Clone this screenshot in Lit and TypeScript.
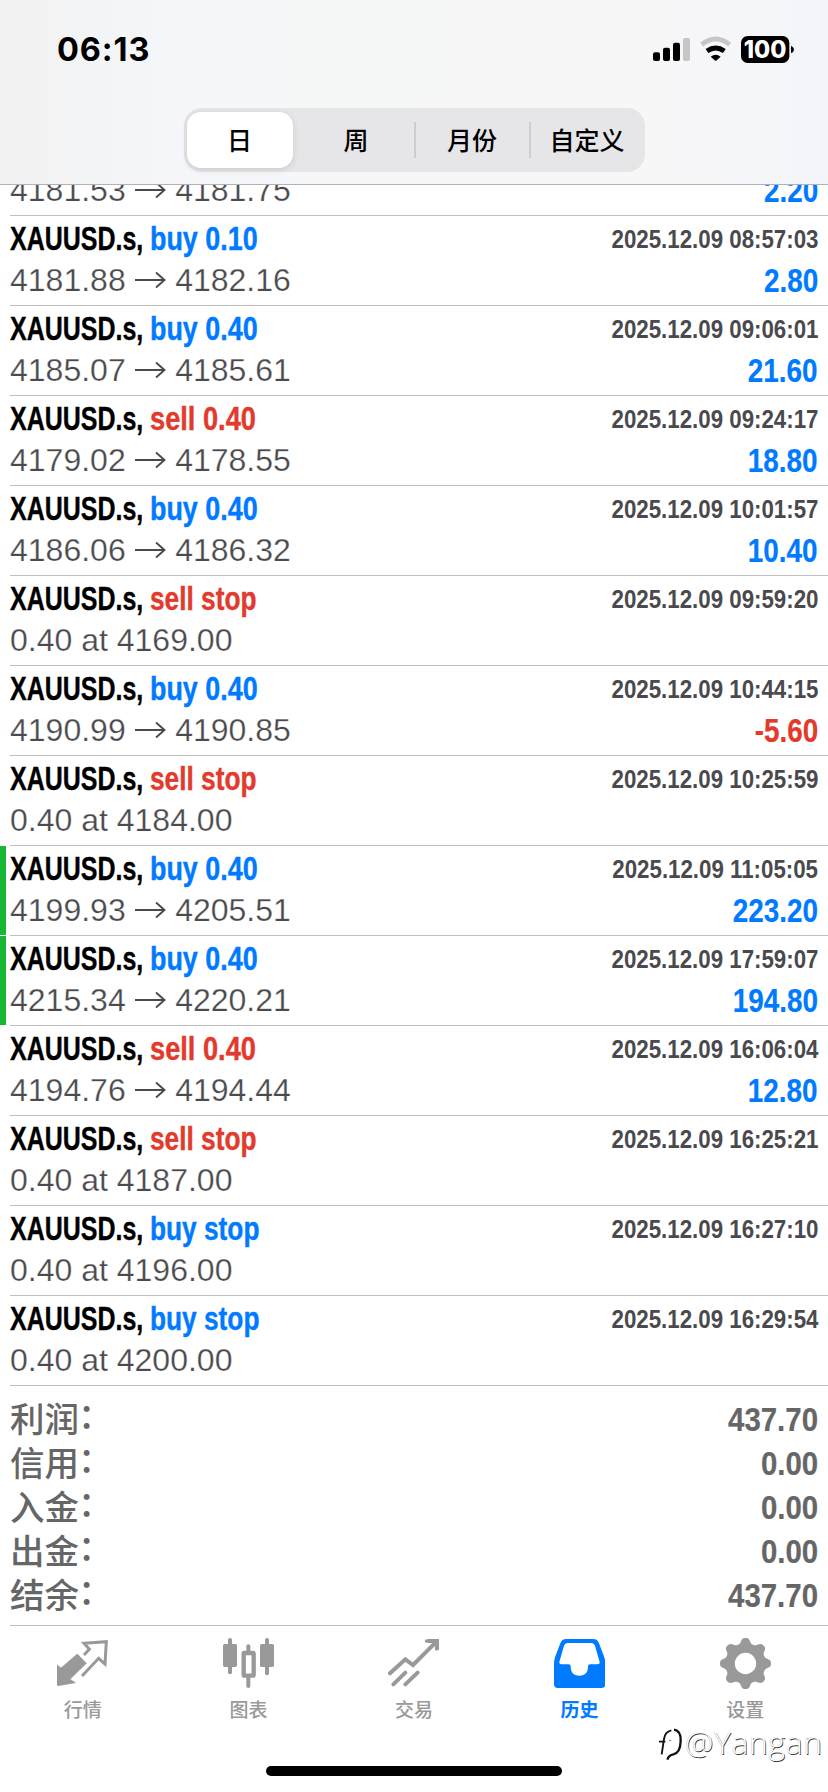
import { LitElement, html, css, svg, nothing } from "lit";
import { customElement, property } from "lit/decorators.js";

interface Deal {
  side: "buy" | "sell";
  size: string;
  detail: string;
  to?: string;
  time: string;
  profit?: string;
  marked?: boolean;
  partial?: boolean;
}

const deal = (side: "buy" | "sell", size: string, detail: string, to: string, time: string, profit: string, marked = false): Deal =>
  ({ side, size, detail, to, time: `2025.12.09 ${time}`, profit, marked });
const order = (side: "buy" | "sell", detail: string, time: string): Deal =>
  ({ side, size: "stop", detail, time: `2025.12.09 ${time}` });

const DEALS: Deal[] = [
  { side: "buy", size: "", detail: "4181.53", to: "4181.75", time: "", profit: "2.20", partial: true },
  deal("buy", "0.10", "4181.88", "4182.16", "08:57:03", "2.80"),
  deal("buy", "0.40", "4185.07", "4185.61", "09:06:01", "21.60"),
  deal("sell", "0.40", "4179.02", "4178.55", "09:24:17", "18.80"),
  deal("buy", "0.40", "4186.06", "4186.32", "10:01:57", "10.40"),
  order("sell", "0.40 at 4169.00", "09:59:20"),
  deal("buy", "0.40", "4190.99", "4190.85", "10:44:15", "-5.60"),
  order("sell", "0.40 at 4184.00", "10:25:59"),
  deal("buy", "0.40", "4199.93", "4205.51", "11:05:05", "223.20", true),
  deal("buy", "0.40", "4215.34", "4220.21", "17:59:07", "194.80", true),
  deal("sell", "0.40", "4194.76", "4194.44", "16:06:04", "12.80"),
  order("sell", "0.40 at 4187.00", "16:25:21"),
  order("buy", "0.40 at 4196.00", "16:27:10"),
  order("buy", "0.40 at 4200.00", "16:29:54"),
];

const TOTALS = [
  ["利润", "437.70"],
  ["信用", "0.00"],
  ["入金", "0.00"],
  ["出金", "0.00"],
  ["结余", "437.70"],
];

@customElement("deal-row")
class DealRow extends LitElement {
  @property({ attribute: false }) deal!: Deal;

  static styles = css`
    :host { display: block; flex: none; font-family: "Liberation Sans", Arial, sans-serif; }
    .row { display: flex; height: 90px; }
    .bar { width: 6px; height: 89px; margin-right: 4px; flex: none; }
    .marked { background: #18b733; }
    .body { flex: 1; box-sizing: border-box; border-bottom: 1px solid #bfbfc1; padding: 2px 10px 0 0; }
    .partial { height: 31px; overflow: hidden; }
    .partial .body { padding-top: 0; }
    .partial .line { margin-top: -16px; }
    .line { display: flex; justify-content: space-between; height: 41px; white-space: nowrap; }
    .title { display: flex; font-weight: 700; font-size: 33px; line-height: 41px; -webkit-text-stroke: 0.4px currentColor; }
    .symbol { width: 140px; color: #000; }
    .fit { display: inline-block; transform-origin: 0 50%; }
    .symbol .fit { transform: scaleX(0.757); }
    .buy { color: #007aff; }
    .sell { color: #e23a2c; }
    .action .fit { transform: scaleX(0.815); }
    .action.sell .fit { transform: scaleX(0.825); }
    .action.stop .fit { transform: scaleX(0.796); }
    .time, .profit { font-weight: 700; transform-origin: 100% 50%; }
    .time { font-size: 26px; line-height: 42px; color: #4a4a4e; transform: scaleX(0.857); }
    .profit { font-size: 33px; line-height: 43px; transform: scaleX(0.845); -webkit-text-stroke: 0.2px currentColor; }
    .price { display: flex; align-items: center; font-size: 32px; line-height: 42px; color: #4a4a4e; -webkit-text-stroke: 0.25px #fff; }
    .arrow { width: 32px; height: 20px; margin: 0 9px 0 8.5px; }
  `;

  render() {
    const d = this.deal;
    const negative = d.profit?.startsWith("-");
    return html`
      <div class="row ${d.partial ? "partial" : ""}">
        <div class="bar ${d.marked ? "marked" : ""}"></div>
        <div class="body">
          ${d.partial
            ? nothing
            : html`<div class="line">
                <div class="title">
                  <div class="symbol"><span class="fit">XAUUSD.s,</span></div>
                  <div class="action ${d.side} ${d.size === "stop" ? "stop" : ""}"><span class="fit">${d.side} ${d.size}</span></div>
                </div>
                <div class="time">${d.time}</div>
              </div>`}
          <div class="line">
            <div class="price">
              <span>${d.detail}</span>
              ${d.to
                ? html`<svg class="arrow" viewBox="0 0 32 20" fill="none" stroke="#4a4a4e" stroke-width="1.9"><path d="M1 10H30M22 2.5 30.5 10 22 17.5" /></svg><span>${d.to}</span>`
                : nothing}
            </div>
            ${d.profit ? html`<div class="profit ${negative ? "sell" : "buy"}">${d.profit}</div>` : nothing}
          </div>
        </div>
      </div>
    `;
  }
}

const gearPath = () => {
  const pts: string[] = [];
  const n = 144;
  for (let i = 0; i < n; i++) {
    const a = (i / n) * Math.PI * 2;
    const c = Math.cos(8 * a);
    const r = 68.5 + 8 * Math.tanh(1.5 * c) / Math.tanh(1.5);
    pts.push(`${(76.5 + r * Math.cos(a)).toFixed(1)} ${(76.5 + r * Math.sin(a)).toFixed(1)}`);
  }
  return `M${pts.join("L")}ZM76.5 44.5a32 32 0 1 0 0 64a32 32 0 1 0 0-64Z`;
};

const TABS = [
  {
    label: "行情",
    box: "174 54 153 153",
    art: svg`<path d="M235 102 262 130 213 178 229 188 177 197 174 194V135L186 144Z" fill="currentColor" stroke="currentColor" stroke-width="2" stroke-linejoin="round"/>
      <path d="M255 105 271 88 255 70 322 65 318 132 299 115 249 168" fill="none" stroke="currentColor" stroke-width="9"/>`,
  },
  {
    label: "图表",
    box: "672 54 153 153",
    art: svg`<g fill="currentColor"><rect x="687" y="54" width="12" height="109" rx="6"/><rect x="672" y="72" width="42" height="69" rx="5"/>
      <rect x="798" y="54" width="12" height="112" rx="6"/><rect x="783" y="72" width="42" height="69" rx="5"/>
      <rect x="742" y="73" width="12" height="26" rx="6"/><rect x="742" y="166" width="12" height="38" rx="6"/></g>
      <rect x="734" y="99" width="30" height="68" rx="2" fill="none" stroke="currentColor" stroke-width="13"/>`,
  },
  {
    label: "交易",
    box: "1165 54 153 153",
    art: svg`<g fill="none" stroke="currentColor" stroke-width="12" stroke-linecap="round"><path d="M1171 160 1217 118 1240 135 1308 67"/><path d="M1285 63H1312V89" stroke-linecap="butt"/><path d="M1281 63H1311V86" stroke-width="11"/><path d="M1181 193 1217 158M1217 193 1254 158"/></g>`,
  },
  {
    label: "历史",
    box: "420 54 153 153",
    active: true,
    art: svg`<path fill="currentColor" fill-rule="evenodd" d="M456 57H538Q551 57 555 70L571 112Q574 122 574 132V193Q574 204 563 204H431Q420 204 420 193V132Q420 122 423 112L439 70Q444 57 456 57ZM460 69Q453 69 450 77L436 126Q435 133 442 133H464Q470 133 470 139C470 158 478 167 496 167C514 167 522 158 522 139Q522 133 528 133H551Q558 133 557 126L543 77Q540 69 533 69Z"/>`,
  },
  {
    label: "设置",
    box: "0 0 153 153",
    art: svg`<path fill="currentColor" fill-rule="evenodd" d="${gearPath()}"/>`,
  },
];

@customElement("app-root")
class AppRoot extends LitElement {
  static styles = css`
    :host {
      display: flex; flex-direction: column; width: 828px; height: 1792px; background: #fff; position: relative; overflow: hidden;
      font-family: "Liberation Sans", "Noto Sans CJK SC", sans-serif;
    }
    .head {
      height: 184px; flex: none; border-bottom: 1px solid #b2b2b5;
      background: linear-gradient(90deg, #f2f2f3 0, #f3f4f5 100px, #f5f7fb 190px, #f5f7fb 280px, #f6f7f7 300px, #f7f7f7 620px, #f5f6fa 780px, #f4f5fa 828px);
      display: flex; flex-direction: column; align-items: center;
    }
    .status { display: flex; align-items: center; align-self: stretch; height: 100px; box-sizing: border-box; padding: 0 33px 1px 57px; }
    .clock { flex: 1; font: 700 32.5px/40px Inter, sans-serif; letter-spacing: 0.9px; color: #000; padding-top: 1px; }
    .signals { width: 142px; height: 27px; }
    .digits { font: 800 71px Inter, sans-serif; fill: #fff; }
    .segments {
      display: grid; grid-template-columns: repeat(4, 115px); box-sizing: border-box; width: 461px; height: 64px; margin-top: 8px;
      border-radius: 18px; background: #e6e6e8; font: 500 25px/36px "Noto Sans CJK SC", sans-serif; color: #000;
    }
    .segment { display: flex; align-items: center; justify-content: center; height: 62px; }
    .segment.chosen { height: 56px; box-sizing: border-box; padding-bottom: 2px; margin: 4px 6px 4px 3px; background: #fff; border-radius: 14px; box-shadow: 0 2px 7px rgba(0, 0, 0, 0.12); }
    .segment.ruled { box-sizing: border-box; padding-left: 2px; background: linear-gradient(#cdcdd0, #cdcdd0) 0 14px / 2px 36px no-repeat; }
    .list { height: 1201px; flex: none; }
    .totals { height: 240px; box-sizing: border-box; flex: none; margin-left: 10px; padding: 12px 10px 0 0; border-bottom: 1px solid #bfbfc1; color: #666; }
    .total { display: flex; justify-content: space-between; height: 44px; }
    .name { display: flex; font: 500 34.5px/38px "Noto Sans CJK SC", sans-serif; height: 38px; }
    .colon { margin: -4px 0 0 -1px; }
    .amount { font-weight: 700; font-size: 34px; line-height: 43px; transform: scaleX(0.865); transform-origin: 100% 50%; -webkit-text-stroke: 0.2px currentColor; }
    .tabs { display: grid; grid-template-columns: repeat(5, 1fr); height: 166px; }
    .tab { display: flex; flex-direction: column; align-items: center; color: #999; padding-top: 12px; }
    .tab.active { color: #007aff; }
    .icon { width: 51px; height: 51px; display: block; }
    .label { font: 500 19px/24px "Noto Sans CJK SC", sans-serif; margin-top: 8px; }
    .active .label { font-weight: 700; }
    .home { position: absolute; left: 266px; top: 1766px; width: 296px; height: 10px; border-radius: 5px; background: #000; }
    .mark { position: absolute; left: 656px; top: 1725px; display: flex; align-items: center; }
    .mark svg { width: 28px; height: 38px; }
    .by { font: 300 32px/36px "Open Sans", sans-serif; color: #fff; margin: -4px 0 0 1px; letter-spacing: 0.6px; white-space: nowrap; text-shadow: 0.7px 0.7px 0.5px rgba(0, 0, 0, 0.8), -0.4px -0.3px 0 rgba(0, 0, 0, 0.25); }
  `;

  render() {
    return html`
      <header class="head">
        <div class="status">
          <div class="clock">06:13</div>
          <svg class="signals" viewBox="717 108 426 81">
            <rect x="717" y="157" width="21" height="26" rx="6" /><rect x="747" y="143" width="21" height="40" rx="6" />
            <rect x="777" y="128" width="21" height="55" rx="6" /><rect x="807" y="114" width="21" height="69" rx="6" fill="#c6c6c8" />
            <path d="M863 134Q905 100 947 134" fill="none" stroke="#c6c6c8" stroke-width="14" />
            <path d="M879 153Q905 135 931 153" fill="none" stroke="#000" stroke-width="15" />
            <path d="M890 170Q905 159 920 170L908 181Q905 184 902 181Z" />
            <rect x="981" y="108" width="145" height="81" rx="20" /><path d="M1131 137Q1140 141 1140 148.5T1131 160Z" />
            <text class="digits" x="1053" y="174" text-anchor="middle" textLength="128" lengthAdjust="spacingAndGlyphs">100</text>
          </svg>
        </div>
        <nav class="segments">
          <div class="segment chosen">日</div>
          <div class="segment">周</div>
          <div class="segment ruled">月份</div>
          <div class="segment ruled">自定义</div>
        </nav>
      </header>
      <main class="list">${DEALS.map((d) => html`<deal-row .deal=${d}></deal-row>`)}</main>
      <section class="totals">
        ${TOTALS.map(([n, v]) => html`<div class="total"><span class="name">${n}<span class="colon">：</span></span><span class="amount">${v}</span></div>`)}
      </section>
      <nav class="tabs">
        ${TABS.map((t) => html`<div class="tab ${t.active ? "active" : ""}"><svg class="icon" viewBox=${t.box}>${t.art}</svg><span class="label">${t.label}</span></div>`)}
      </nav>
      <div class="mark">
        <svg viewBox="0 0 84 114" fill="none" stroke="#111" stroke-width="5.5">
          <path d="M9 50H28M17 88 24 42Q27 20 46 16" /><path d="M54 14Q76 18 74 48Q73 84 52 88Q38 90 34 104" stroke-width="7" /><circle cx="42" cy="46" r="2" stroke="none" fill="#111" />
        </svg>
        <span class="by">@Yangan</span>
      </div>
      <div class="home"></div>
    `;
  }
}
